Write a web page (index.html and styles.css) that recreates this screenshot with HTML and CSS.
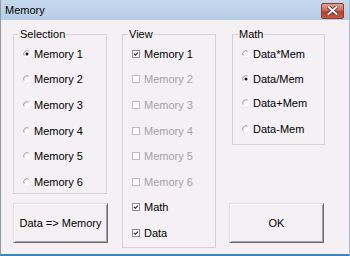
FILE: index.html
```html
<!DOCTYPE html>
<html>
<head>
<meta charset="utf-8">
<link rel="stylesheet" href="styles.css">
</head>
<body>
<div class="window">
  <div class="titlebar">
    <span class="title">Memory</span>
    <div class="close">
      <svg width="11" height="9" viewBox="0 0 11 9"><path d="M1.5 1 L9.5 8 M9.5 1 L1.5 8" stroke="#5a2020" stroke-width="3.4" stroke-linecap="square"/><path d="M1.5 1 L9.5 8 M9.5 1 L1.5 8" stroke="#fff" stroke-width="2" stroke-linecap="square"/></svg>
    </div>
  </div>
  <div class="client">
    <div class="col">
      <div class="group sel">
        <span class="glabel">Selection</span>
        <div class="row"><svg class="radio" viewBox="0 0 8 8"><circle cx="4" cy="4" r="3.2" fill="#fff"/><path d="M1.2 5.6 A3.2 3.2 0 0 1 5.6 1.2" fill="none" stroke="#8a8a8a" stroke-width="0.9"/><circle cx="4" cy="4" r="1.5" fill="#111"/></svg><span>Memory 1</span></div>
        <div class="row"><svg class="radio" viewBox="0 0 8 8"><circle cx="4" cy="4" r="3.2" fill="#fff"/><path d="M1.2 5.6 A3.2 3.2 0 0 1 5.6 1.2" fill="none" stroke="#8a8a8a" stroke-width="0.9"/></svg><span>Memory 2</span></div>
        <div class="row"><svg class="radio" viewBox="0 0 8 8"><circle cx="4" cy="4" r="3.2" fill="#fff"/><path d="M1.2 5.6 A3.2 3.2 0 0 1 5.6 1.2" fill="none" stroke="#8a8a8a" stroke-width="0.9"/></svg><span>Memory 3</span></div>
        <div class="row"><svg class="radio" viewBox="0 0 8 8"><circle cx="4" cy="4" r="3.2" fill="#fff"/><path d="M1.2 5.6 A3.2 3.2 0 0 1 5.6 1.2" fill="none" stroke="#8a8a8a" stroke-width="0.9"/></svg><span>Memory 4</span></div>
        <div class="row"><svg class="radio" viewBox="0 0 8 8"><circle cx="4" cy="4" r="3.2" fill="#fff"/><path d="M1.2 5.6 A3.2 3.2 0 0 1 5.6 1.2" fill="none" stroke="#8a8a8a" stroke-width="0.9"/></svg><span>Memory 5</span></div>
        <div class="row"><svg class="radio" viewBox="0 0 8 8"><circle cx="4" cy="4" r="3.2" fill="#fff"/><path d="M1.2 5.6 A3.2 3.2 0 0 1 5.6 1.2" fill="none" stroke="#8a8a8a" stroke-width="0.9"/></svg><span>Memory 6</span></div>
      </div>
      <button class="btn btn-data">Data =&gt; Memory</button>
    </div>
    <div class="col">
      <div class="group view">
        <span class="glabel">View</span>
        <div class="row"><svg class="check" viewBox="0 0 8 8"><rect x="0.5" y="0.5" width="7" height="7" fill="#fff" stroke="#8c8c8c"/><path d="M2 3.8 L3.4 5.3 L6 2.5" fill="none" stroke="#111" stroke-width="1.1"/></svg><span>Memory 1</span></div>
        <div class="row off"><svg class="check" viewBox="0 0 8 8"><rect x="0.5" y="0.5" width="7" height="7" fill="#fff" stroke="#bdbdbd"/></svg><span>Memory 2</span></div>
        <div class="row off"><svg class="check" viewBox="0 0 8 8"><rect x="0.5" y="0.5" width="7" height="7" fill="#fff" stroke="#bdbdbd"/></svg><span>Memory 3</span></div>
        <div class="row off"><svg class="check" viewBox="0 0 8 8"><rect x="0.5" y="0.5" width="7" height="7" fill="#fff" stroke="#bdbdbd"/></svg><span>Memory 4</span></div>
        <div class="row off"><svg class="check" viewBox="0 0 8 8"><rect x="0.5" y="0.5" width="7" height="7" fill="#fff" stroke="#bdbdbd"/></svg><span>Memory 5</span></div>
        <div class="row off"><svg class="check" viewBox="0 0 8 8"><rect x="0.5" y="0.5" width="7" height="7" fill="#fff" stroke="#bdbdbd"/></svg><span>Memory 6</span></div>
        <div class="row"><svg class="check" viewBox="0 0 8 8"><rect x="0.5" y="0.5" width="7" height="7" fill="#fff" stroke="#8c8c8c"/><path d="M2 3.8 L3.4 5.3 L6 2.5" fill="none" stroke="#111" stroke-width="1.1"/></svg><span>Math</span></div>
        <div class="row"><svg class="check" viewBox="0 0 8 8"><rect x="0.5" y="0.5" width="7" height="7" fill="#fff" stroke="#8c8c8c"/><path d="M2 3.8 L3.4 5.3 L6 2.5" fill="none" stroke="#111" stroke-width="1.1"/></svg><span>Data</span></div>
      </div>
    </div>
    <div class="col">
      <div class="group math">
        <span class="glabel">Math</span>
        <div class="row"><svg class="radio" viewBox="0 0 8 8"><circle cx="4" cy="4" r="3.2" fill="#fff"/><path d="M1.2 5.6 A3.2 3.2 0 0 1 5.6 1.2" fill="none" stroke="#8a8a8a" stroke-width="0.9"/></svg><span>Data*Mem</span></div>
        <div class="row r2"><svg class="radio" viewBox="0 0 8 8"><circle cx="4" cy="4" r="3.2" fill="#fff"/><path d="M1.2 5.6 A3.2 3.2 0 0 1 5.6 1.2" fill="none" stroke="#8a8a8a" stroke-width="0.9"/><circle cx="4" cy="4" r="1.5" fill="#111"/></svg><span>Data/Mem</span></div>
        <div class="row r3"><svg class="radio" viewBox="0 0 8 8"><circle cx="4" cy="4" r="3.2" fill="#fff"/><path d="M1.2 5.6 A3.2 3.2 0 0 1 5.6 1.2" fill="none" stroke="#8a8a8a" stroke-width="0.9"/></svg><span>Data+Mem</span></div>
        <div class="row"><svg class="radio" viewBox="0 0 8 8"><circle cx="4" cy="4" r="3.2" fill="#fff"/><path d="M1.2 5.6 A3.2 3.2 0 0 1 5.6 1.2" fill="none" stroke="#8a8a8a" stroke-width="0.9"/></svg><span>Data-Mem</span></div>
      </div>
      <button class="btn btn-ok">OK</button>
    </div>
  </div>
</div>
</body>
</html>
```

FILE: styles.css
```css
html, body {
  margin: 0;
  padding: 0;
  background: #f4f0f4;
}
.window {
  width: 350px;
  height: 256px;
  box-sizing: border-box;
  background: #f4f0f4;
  border-left: 1px solid #8f9aa6;
  border-right: 1px solid #a9bccf;
  border-bottom: 2px solid #3f84b6;
  font-family: "Liberation Sans", Arial, sans-serif;
  font-size: 11px;
  color: #000;
  display: flex;
  flex-direction: column;
}
.titlebar {
  height: 20px;
  flex: none;
  background: linear-gradient(#c4d8ee, #b6cde6);
  display: flex;
  align-items: center;
  justify-content: space-between;
  padding: 0 5px 0 4px;
}
.title {
  font-size: 11px;
  color: #000;
}
.close {
  width: 23px;
  height: 16px;
  margin-top: 1px;
  box-sizing: border-box;
  border: 1px solid #8a3a32;
  border-radius: 2px;
  background: linear-gradient(#e1a190, #cf6a55 45%, #bb3f2b 55%, #c8573f);
  display: flex;
  align-items: center;
  justify-content: center;
}
.client {
  flex: 1;
  display: flex;
  padding: 14px 0 0 12px;
}
.col {
  display: flex;
  flex-direction: column;
}
.group {
  position: relative;
  border: 1px solid #d4d0d6;
  box-sizing: border-box;
  padding-top: 6px;
  padding-left: 9px;
}
.glabel {
  position: absolute;
  top: -7px;
  left: 5px;
  line-height: 13px;
  padding: 0 1px;
  background: #f4f0f4;
  font-size: 11px;
}
.row {
  height: 25.6px;
  display: flex;
  align-items: center;
  white-space: nowrap;
}
.row.off {
  color: #a4a2a4;
}
.radio {
  width: 8px;
  height: 8px;
  margin-right: 3px;
  flex: none;
}
.check {
  width: 8px;
  height: 8px;
  margin-right: 4px;
  flex: none;
}
.sel {
  width: 94px;
  height: 160px;
}
.view {
  width: 94px;
  height: 214px;
  margin-left: 14px;
}
.math {
  width: 93px;
  height: 111px;
  margin-left: 16px;
}
.math .r2 { height: 24px; }
.math .r3 { height: 25.6px; }
.btn {
  font-family: "Liberation Sans", Arial, sans-serif;
  font-size: 11px;
  color: #000;
  background: #f4f0f4;
  height: 40px;
  box-sizing: border-box;
  border: 1px solid;
  border-color: #e0dde0 #6a6a6a #6a6a6a #e0dde0;
  box-shadow: inset 1px 1px #fdfbfd, inset -1px -1px #a3a1a3;
  padding: 0;
}
.btn-data {
  width: 95px;
  margin-top: 9px;
}
.btn-ok {
  width: 95px;
  margin-top: 58px;
  margin-left: 13px;
}
```
